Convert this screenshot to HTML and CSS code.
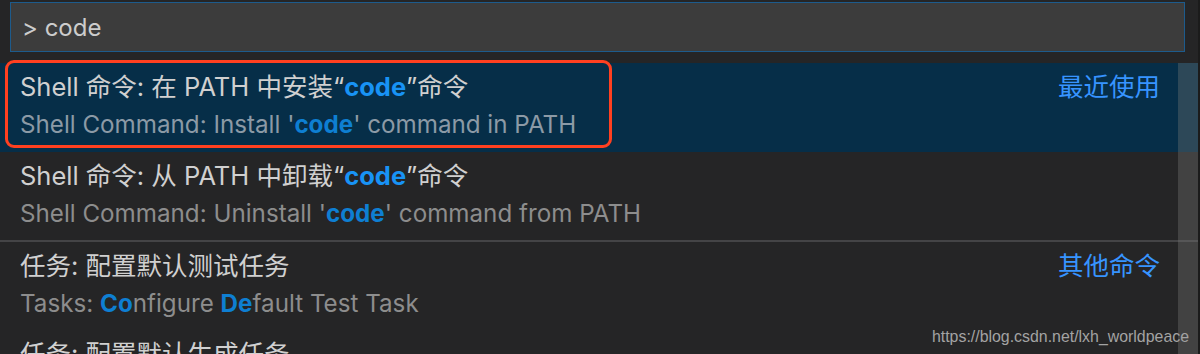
FILE: index.html
```html
<!DOCTYPE html>
<html lang="zh">
<head>
<meta charset="utf-8">
<link rel="stylesheet" href="styles.css">
</head>
<body>
<div class="palette">
  <div class="input-wrap"><div class="input">&gt; code</div></div>
  <div class="list">
    <div class="row selected">
      <div class="line1"><span>Shell 命令: 在 PATH 中安装“<b class="hl">code</b>”命令</span><span class="tag">最近使用</span></div>
      <div class="line2">Shell Command: Install '<b class="hl2">code</b>' command in PATH</div>
      <div class="annot"></div>
    </div>
    <div class="row second">
      <div class="line1"><span>Shell 命令: 从 PATH 中卸载“<b class="hl">code</b>”命令</span></div>
      <div class="line2">Shell Command: Uninstall '<b class="hl2">code</b>' command from PATH</div>
    </div>
    <div class="row sep">
      <div class="line1"><span>任务: 配置默认测试任务</span><span class="tag">其他命令</span></div>
      <div class="line2">Tasks: <b class="hl2">Co</b>nfigure <b class="hl2">De</b>fault Test Task</div>
    </div>
    <div class="row">
      <div class="line1"><span>任务: 配置默认生成任务</span></div>
    </div>
    <div class="scrollbar"></div>
    <div class="watermark">https://blog.csdn.net/lxh_worldpeace</div>
  </div>
</div>
</body>
</html>
```
FILE: styles.css
```css
html, body {
  margin: 0;
  padding: 0;
  background: #252526;
  height: 354px;
  overflow: hidden;
}
.palette {
  width: 1198px;
  height: 354px;
  overflow: hidden;
  background: #252526;
  border-right: 2px solid #1b1b1b;
  font-family: "Inter", "Noto Sans CJK SC", sans-serif;
  color: #cccccc;
}
.input-wrap {
  padding: 2px 13px 0 10px;
  height: 63px;
  box-sizing: border-box;
}
.input {
  height: 50px;
  box-sizing: border-box;
  background: #3c3c3c;
  border: 1px solid #1d5b8c;
  font-size: 24px;
  line-height: 50px;
  padding-left: 11px;
  color: #cccccc;
}
.list {
  position: relative;
}
.row {
  position: relative;
  height: 89px;
  box-sizing: border-box;
  padding: 4px 38px 0 20px;
}
.row.second {
  height: 88px;
}
.row.selected {
  background: #062e48;
}
.row.sep {
  border-top: 2px solid #444446;
  height: 90px;
}
.line1 {
  display: flex;
  justify-content: space-between;
  font-size: 25.5px;
  line-height: 40px;
  color: #d0d0d0;
}
.line2 {
  font-size: 24.2px;
  line-height: 36px;
  color: #8d8d8d;
}
.selected .line2 {
  color: #8c9aa6;
}
.hl {
  color: #1893f5;
  font-weight: 700;
}
.hl2 {
  color: #0e7fd2;
  font-weight: 700;
}
.tag {
  color: #3794ff;
  font-size: 25.5px;
}
.annot {
  position: absolute;
  left: 5px;
  top: -3px;
  width: 607px;
  height: 88px;
  box-sizing: border-box;
  border: 3px solid #ff4020;
  border-radius: 9px;
}
.scrollbar {
  position: absolute;
  right: 0;
  top: 0;
  width: 20px;
  height: 300px;
  background: rgba(121, 121, 121, 0.35);
}
.watermark {
  position: absolute;
  right: 9px;
  top: 265px;
  white-space: nowrap;
  font-family: "Liberation Sans", sans-serif;
  font-size: 15.9px;
  color: #a3a3a3;
}
```
